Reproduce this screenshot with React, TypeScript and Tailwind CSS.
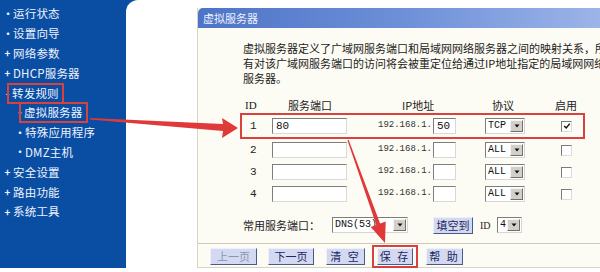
import React from "react";

const cjk = "font-['Noto_Sans_CJK_SC','Noto_Sans',sans-serif]";
const mono = "font-['Liberation_Mono','DejaVu_Sans_Mono',monospace]";

function Arrow() {
  return (
    <svg viewBox="0 0 16 16" className="h-[8px] w-[8px]">
      <path d="M3 5 L13 5 L8 11 Z" fill="#111" />
    </svg>
  );
}

function Select({ label, box }: { label: string; box: string }) {
  return (
    <div className={`flex h-[16px] items-stretch border border-[#7d7d7d] border-b-[#d6d6d6] border-r-[#d6d6d6] bg-white ${box}`}>
      <span className={`flex-1 whitespace-nowrap pl-[2px] text-[10px] leading-[14px] text-[#111] ${mono}`}>{label}</span>
      <span className="m-[1px] flex w-[13px] shrink-0 items-center justify-center border border-[#f4f4f4] border-b-[#707070] border-r-[#707070] bg-[#d4d0c8]">
        <Arrow />
      </span>
    </div>
  );
}

function Input({ value, box }: { value?: string; box: string }) {
  return (
    <div className={`h-[16px] border border-[#7d7d7d] border-b-[#d9d9d9] border-r-[#d9d9d9] bg-white pl-[3px] text-[11px] leading-[14px] text-[#111] ${mono} ${box}`}>
      {value}
    </div>
  );
}

function Check({ on }: { on?: boolean }) {
  return (
    <div className="flex h-[11px] w-[11px] items-center justify-center border border-[#7a7a7a] border-b-[#dcdcdc] border-r-[#dcdcdc] bg-white">
      {on && (
        <svg viewBox="0 0 10 10" className="h-[8px] w-[8px]">
          <path d="M1.5 5 L4 7.5 L8.5 2" stroke="#111" strokeWidth="1.8" fill="none" />
        </svg>
      )}
    </div>
  );
}

function Btn({ label, box, off, wide }: { label: string; box: string; off?: boolean; wide?: boolean }) {
  return (
    <div
      className={`flex h-[17px] items-center justify-center whitespace-nowrap border border-[#eef0fb] border-b-[#4a5a8c] border-r-[#4a5a8c] bg-[#d3d9f1] text-[11px] ${
        wide ? "tracking-[2px]" : "tracking-normal"
      } ${off ? "text-[#8d95b4]" : "text-[#1d2660]"} ${box}`}
    >
      {label}
    </div>
  );
}

const menu = [
  { mark: "•", text: "运行状态" },
  { mark: "•", text: "设置向导" },
  { mark: "+", text: "网络参数" },
  { mark: "+", text: "DHCP服务器" },
  { mark: "-", text: "转发规则", boxed: true },
  { mark: "•", text: "虚拟服务器", sub: true, boxed: true },
  { mark: "•", text: "特殊应用程序", sub: true },
  { mark: "•", text: "DMZ主机", sub: true },
  { mark: "+", text: "安全设置" },
  { mark: "+", text: "路由功能" },
  { mark: "+", text: "系统工具" },
];

const rows = [
  { id: "1", port: "80", ip: "50", proto: "TCP", on: true },
  { id: "2", port: "", ip: "", proto: "ALL" },
  { id: "3", port: "", ip: "", proto: "ALL" },
  { id: "4", port: "", ip: "", proto: "ALL" },
];

export default function App() {
  return (
    <div className={`relative flex h-[272px] w-[600px] overflow-hidden bg-white ${cjk}`}>
      {/* SIDEBAR */}
      <aside className="h-[268px] w-[126px] shrink-0 bg-[#0a4ea3] pt-[4px] text-[#eef3ff]">
        {menu.map((m, i) => (
          <div key={i} className={`flex h-[19.8px] items-center ${m.sub ? "pl-[15px]" : "pl-[3px]"}`}>
            <span className="w-[9px] text-center text-[10px] font-bold leading-none">{m.mark}</span>
            <span
              className={`whitespace-nowrap text-[11.5px] leading-[15px] tracking-[0.2px] ${
                m.boxed ? "-ml-[5px] border-2 border-[#d8413c] px-[3px] py-[1px]" : "ml-[1px]"
              }`}
            >
              {m.text}
            </span>
          </div>
        ))}
      </aside>

      {/* GAP */}
      <div className="h-[268px] w-[71px] shrink-0 bg-[#0a4ea3]">
        <div className="h-full rounded-tl-[12px] bg-white" />
      </div>

      {/* PANEL */}
      <main className="mt-[8px] h-[260px] w-[403px] border-l border-b border-[#d9d4c2] bg-[#fdfcf4]">
        <div className="h-[20px] rounded-tl-[5px] bg-gradient-to-r from-[#4d74c5] via-[#6d8fd8] to-[#9cb4e8] pl-[5px] text-[11px] leading-[20px] text-[#eef2ff]">
          虚拟服务器
        </div>

        <div className="overflow-hidden pl-[45px]">
          <p className="mt-[13px] whitespace-nowrap text-[11px] leading-[15px] text-[#222]">
            虚拟服务器定义了广域网服务端口和局域网网络服务器之间的映射关系，所
            <br />
            有对该广域网服务端口的访问将会被重定位给通过IP地址指定的局域网网络
            <br />
            服务器。
          </p>
        </div>

        {/* TABLE */}
        <div className="ml-[42px] mt-[12px] w-[345px] text-[11px] text-[#222]">
          <div className="flex h-[15px] items-center px-[2px]">
            <span className="w-[26px] pl-[3px] font-['Liberation_Serif',serif]">ID</span>
            <span className="w-[104px] pl-[20px]">服务端口</span>
            <span className="w-[111px] pl-[30px]">IP地址</span>
            <span className="w-[62px] pl-[9px]">协议</span>
            <span className="w-[38px] pl-[10px]">启用</span>
          </div>
          {rows.map((r) => (
            <div
              key={r.id}
              className={`flex h-[22px] items-center border-2 ${r.on ? "box-content border-[#d8413c]" : "border-transparent"}`}
            >
              <span className={`w-[26px] pl-[8px] text-[11px] ${mono}`}>{r.id}</span>
              <div className="w-[104px] pl-[4px]">
                <Input value={r.port} box="w-[75px]" />
              </div>
              <div className="flex w-[111px] items-center pl-[6px]">
                <span className={`w-[55px] text-[9px] text-[#333] ${mono}`}>192.168.1.</span>
                <Input value={r.ip} box="w-[23px]" />
              </div>
              <div className="w-[62px] pl-[2px]">
                <Select label={r.proto} box="w-[40px]" />
              </div>
              <div className="w-[38px] pl-[16px]">
                <Check on={r.on} />
              </div>
            </div>
          ))}

          <div className="mt-[11px] flex h-[18px] items-center">
            <span className="w-[92px] pl-[3px]">常用服务端口：</span>
            <Select label="DNS(53)" box="w-[76px]" />
            <Btn label="填空到" box="ml-[25px] w-[40px]" />
            <span className="ml-[7px] w-[17px] font-['Liberation_Serif',serif] text-[10px]">ID</span>
            <Select label="4" box="w-[25px]" />
          </div>
        </div>

        {/* FOOTER */}
        <div className="mt-[9px] border-t border-[#cfcab8]">
          <div className="mt-[1px] flex h-[22px] items-center pl-[12px]">
            <Btn label="上一页" box="w-[47px]" off />
            <Btn label="下一页" box="ml-[11px] w-[46px]" />
            <Btn label="清 空" box="ml-[12px] w-[39px]" wide />
            <div className="ml-[7px] border-2 border-[#d8413c] px-[3px] py-[1px]">
              <Btn label="保 存" box="w-[36px]" wide />
            </div>
            <Btn label="帮 助" box="ml-[8px] w-[37px]" wide />
          </div>
        </div>
      </main>

      {/* ARROWS */}
      <svg className="pointer-events-none absolute left-0 top-0 h-[272px] w-[600px]" viewBox="0 0 600 272">
        <polygon
          points="90,118 223,124 222,118 238,128 222,138 223,131 90,119.5"
          fill="#e0393a"
        />
        <polygon
          points="347.4,140.2 348.6,139.8 380.1,223.5 385.7,221.5 385,243 370.7,226.9 376.3,224.9"
          fill="#e0393a"
        />
      </svg>
    </div>
  );
}
